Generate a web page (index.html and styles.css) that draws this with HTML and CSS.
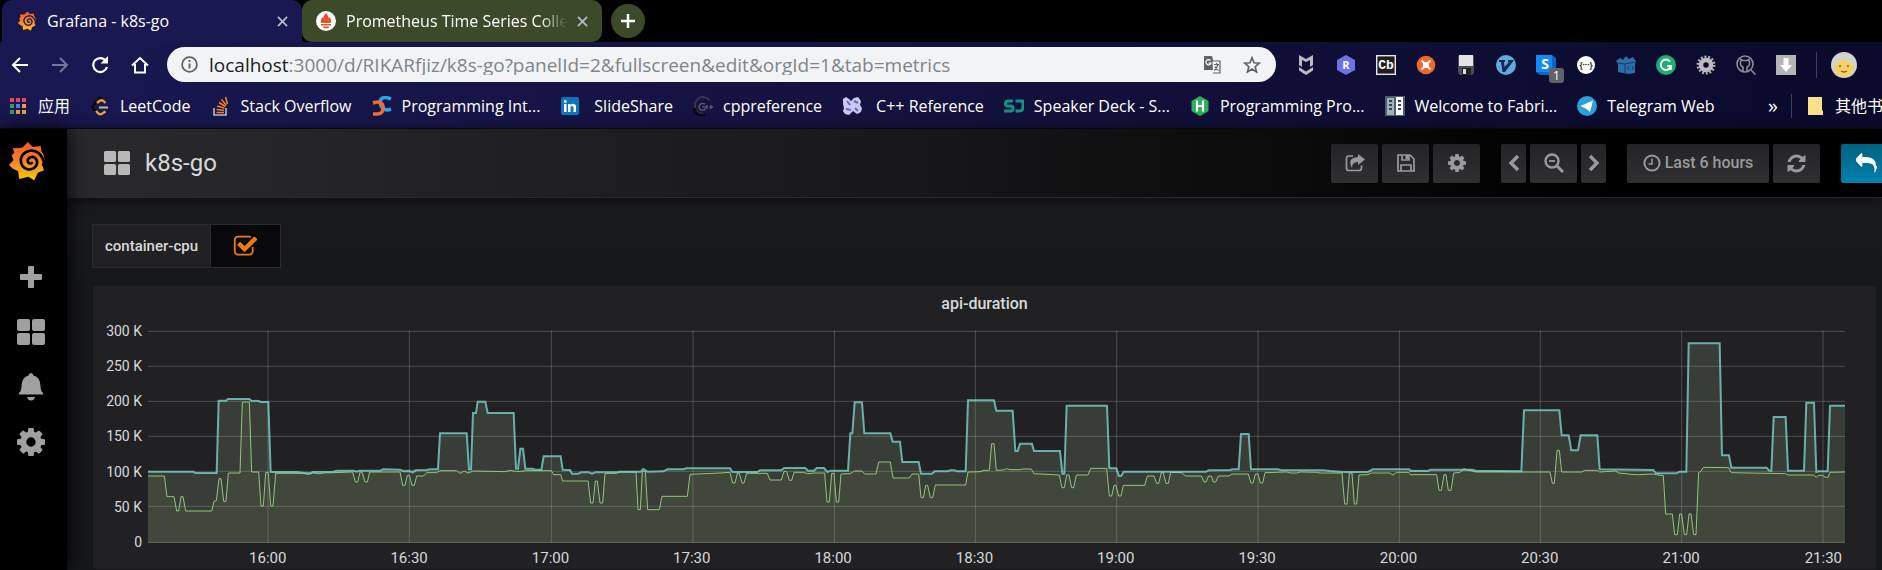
FILE: index.html
```html
<!DOCTYPE html>
<html lang="en">
<head>
<meta charset="utf-8">
<title>Grafana - k8s-go</title>
<link rel="stylesheet" href="styles.css">
</head>
<body>
<svg class="defs" aria-hidden="true">
  <defs>
    <linearGradient id="sun" x1="0" y1="0" x2="0" y2="1"><stop offset="0" stop-color="#f05a28"/><stop offset=".5" stop-color="#f5822a"/><stop offset="1" stop-color="#fbca0a"/></linearGradient>
    <symbol id="grafana" viewBox="25 48 114 122">
      <path fill="url(#sun)" d="M85 51 L99 66 L124 63 L126 80 C133 88 136 98 135 110 L127 119 L134 137 L115 145 L104 168 L86 157 L58 164 L55 140 L38 132 L27 121 L41 106 L35 92 L43 84 L39 70 L60 69 L69 67 Z"/>
      <path fill="none" stroke="currentColor" stroke-width="8" stroke-linecap="round" d="M134 116 C128 86 108 74 90 78 C70 82 60 98 64 114 C68 132 88 140 103 131 C115 123 116 107 106 99 C98 93 85 98 84 108 C84 115 91 119 97 115"/>
    </symbol>
    <symbol id="cog" viewBox="0 -128 1536 1536"><path fill="currentColor" d="M1024 640q0-106-75-181t-181-75-181 75-75 181 75 181 181 75 181-75 75-181zm512-109v222q0 12-8 23t-20 13l-185 28q-19 54-39 91 35 50 107 138 10 12 10 25t-9 23q-27 37-99 108t-94 71q-12 0-26-9l-138-108q-44 23-91 38-16 136-29 186-7 28-36 28h-222q-14 0-24.500-8.500t-11.500-21.500l-28-184q-49-16-90-37l-141 107q-10 9-25 9-14 0-25-11-126-114-165-168-7-10-7-23 0-12 8-23 15-21 51-66.500t54-70.500q-27-50-41-99l-183-27q-13-2-21-12.500t-8-23.500v-222q0-12 8-23t19-13l186-28q14-46 39-92-40-57-107-138-10-12-10-24 0-10 9-23 26-36 98.500-107.500t94.500-71.500q13 0 26 10l138 107q44-23 91-38 16-136 29-186 7-28 36-28h222q14 0 24.500 8.500t11.500 21.500l28 184q49 16 90 37l142-107q9-9 24-9 13 0 25 10 129 119 165 170 7 8 7 22 0 12-8 23-15 21-51 66.500t-54 70.500q26 50 41 98l183 28q13 2 21 12.500t8 23.500z"/></symbol>
    <symbol id="tiles" viewBox="0 0 28 26"><g fill="currentColor"><rect width="13" height="12" rx="2"/><rect x="15" width="13" height="12" rx="2"/><rect y="14" width="13" height="12" rx="2"/><rect x="15" y="14" width="13" height="12" rx="2"/></g></symbol>
    <symbol id="close" viewBox="0 0 12 12"><path d="M1 1 L11 11 M11 1 L1 11" stroke="currentColor" stroke-width="2" fill="none"/></symbol>
  </defs>
</svg>

<header class="browser">
  <div class="tabs">
    <div class="tab tab-active">
      <svg class="fav fav-grafana"><use href="#grafana"/></svg>
      <span class="tab-title">Grafana - k8s-go</span>
      <button class="tab-close" aria-label="Close tab"><svg width="11" height="11"><use href="#close"/></svg></button>
    </div>
    <div class="tab tab-idle">
      <svg class="fav" viewBox="0 0 20 20"><circle cx="10" cy="10" r="10" fill="#fff"/><path fill="#e6522c" d="M10 1.500 C11 4 13 5 12.500 7 L14 6 C14.500 8 15.500 9 15 12 H5 C4.500 9 5.500 8 6 6 L7.500 7 C7 5 9 4 10 1.500Z M5 13h10v1.500H5z M6.500 15.500h7 C12.500 18 7.500 18 6.500 15.500Z"/></svg>
      <span class="tab-title">Prometheus Time Series Collec</span>
      <button class="tab-close" aria-label="Close tab"><svg width="11" height="11"><use href="#close"/></svg></button>
    </div>
    <button class="new-tab" aria-label="New tab"><svg width="16" height="16" viewBox="0 0 16 16"><path d="M8 1v14M1 8h14" stroke="#fff" stroke-width="2.500"/></svg></button>
  </div>

  <div class="toolbar">
    <div class="nav-buttons">
      <button aria-label="Back"><svg width="18" height="18" viewBox="0 0 18 18"><path d="M17 9H2M9 2L2 9l7 7" fill="none" stroke="#fff" stroke-width="2"/></svg></button>
      <button aria-label="Forward"><svg width="18" height="18" viewBox="0 0 18 18"><path d="M1 9h15M9 2l7 7-7 7" fill="none" stroke="#77769a" stroke-width="2"/></svg></button>
      <button aria-label="Reload"><svg width="18" height="18" viewBox="0 0 18 18"><path d="M15 5A7 7 0 1 0 16 11" fill="none" stroke="#fff" stroke-width="2.200"/><path d="M17 0v7.500H9.500z" fill="#fff"/></svg></button>
      <button aria-label="Home"><svg width="18" height="18" viewBox="0 0 18 18"><path d="M1 9.500L9 2l8 7.500M4 8v8.500h10V8" fill="none" stroke="#fff" stroke-width="2"/></svg></button>
    </div>
    <form class="omnibox">
      <svg width="17" height="17" viewBox="0 0 17 17"><circle cx="8.500" cy="8.500" r="7.400" fill="none" stroke="#5f6368" stroke-width="1.800"/><path d="M8.500 7.500v5M8.500 4v2" stroke="#5f6368" stroke-width="1.900"/></svg>
      <label class="host" for="url">localhost</label><input id="url" type="text" value=":3000/d/RIKARfjiz/k8s-go?panelId=2&amp;fullscreen&amp;edit&amp;orgId=1&amp;tab=metrics">
      <button type="button" aria-label="Translate"><svg width="18" height="18" viewBox="0 0 18 18"><path d="M1 0h8l4 14H1z" fill="#5f6368"/><path d="M9.500 5H17v12H10" fill="#f1f3f4" stroke="#5f6368" stroke-width="1.200"/><path d="M7.500 4.500A2.600 2.600 0 1 0 8 7H5.500" fill="none" stroke="#fff" stroke-width="1.200"/><path d="M11 8.500h5M13.500 7v1.500M15 8.500q-1 4-4 6M11.800 10.500q1.500 3 4 4" fill="none" stroke="#5f6368" stroke-width="1.100"/></svg></button>
      <button type="button" aria-label="Bookmark this page"><svg width="18" height="18" viewBox="0 0 18 18"><path d="M9 1.800l2 5 5.200.400-4 3.500 1.300 5.200L9 13l-4.500 2.900 1.300-5.200-4-3.500L7 6.800z" fill="none" stroke="#5f6368" stroke-width="1.700"/></svg></button>
    </form>
    <div class="extensions">
      <button aria-label="Extension: shield"><svg viewBox="0 0 20 20"><path fill="#b9bbc0" d="M3 0l7 4 7-4v10l-3 2V5l-4 2-4-2v7l-3-2z"/><path fill="#b9bbc0" d="M3 12l7 4.500 7-4.500v3.500L10 20l-7-4.500z"/></svg></button>
      <button aria-label="Extension: R"><svg viewBox="0 0 20 20"><path fill="#6f72e6" d="M10 0l9 5v10l-9 5-9-5V5z"/><text x="10" y="14" class="glyph g11">R</text></svg></button>
      <button aria-label="Extension: Cb"><svg viewBox="0 0 20 20"><rect x=".7" y=".7" width="18.600" height="18.600" fill="#1e1e1e" stroke="#e6e6e6" stroke-width="1.400"/><text x="10" y="14" class="glyph mono">Cb</text></svg></button>
      <button aria-label="Extension: lifebuoy"><svg viewBox="0 0 20 20"><circle cx="10" cy="10" r="9.300" fill="#f1662a"/><path d="M5.500 5.500l3 3M14.500 5.500l-3 3M5.500 14.500l3-3M14.500 14.500l-3-3" stroke="#fff" stroke-width="2"/><circle cx="10" cy="10" r="3" fill="#fff"/></svg></button>
      <button aria-label="Extension: save"><svg viewBox="0 0 20 20"><path fill="#4a4d55" d="M2 1h16v17l-2 2H4l-2-2z"/><path fill="#e5e5e8" d="M3 0h14v11H3z"/><path fill="#222" d="M6 13h9v7H6z"/><path fill="#dcdce0" d="M7 14h3v5H7z"/></svg></button>
      <button aria-label="Extension: V"><svg viewBox="0 0 20 20"><circle cx="10" cy="10" r="10" fill="#64a9dc"/><path fill="#0c2b55" d="M3 5h6v2H8l.5 5L13 7h-1V5h6L9 17H6.500L5 7H3z"/></svg></button>
      <button class="with-badge" aria-label="Extension: S, 1"><svg viewBox="0 0 20 20"><path fill="#0e62c9" d="M16 0l4 3v17H4l-4-3z"/><path fill="#1689f5" d="M0 0h16v17H0z"/><text x="9" y="14" class="glyph g14">S</text></svg><span class="badge">1</span></button>
      <button aria-label="Extension: JSON"><svg viewBox="0 0 20 20"><circle cx="10" cy="10" r="9" fill="#fff"/><text x="10" y="13" class="glyph braces">{···}</text></svg></button>
      <button aria-label="Extension: box"><svg viewBox="0 0 20 20"><path fill="#2a6fa8" d="M0 6l4-3 3 2 3-4 3 3 4-2 3 4-1 3v9l-7 1-10-2V9z"/><path d="M1 8l8 1 10-2M9 9v10M13 11l-1.500 2 1.500 2M16 11l1.500 2-1.500 2" stroke="#123b66" fill="none"/></svg></button>
      <button aria-label="Extension: G"><svg viewBox="0 0 20 20"><circle cx="10" cy="10" r="10" fill="#1fae71"/><path d="M14 6.500A5.200 5.200 0 1 0 15 11h-4M15 11l-.3 4" fill="none" stroke="#fff" stroke-width="1.900"/></svg></button>
      <button aria-label="Extension: gear"><svg viewBox="0 0 20 20"><circle cx="10" cy="10" r="8" fill="none" stroke="#a9aab0" stroke-width="3" stroke-dasharray="2 1.590"/><circle cx="10" cy="10" r="5" fill="none" stroke="#bcbcc0" stroke-width="4.500"/></svg></button>
      <button aria-label="Extension: code search"><svg viewBox="0 0 20 20"><circle cx="9" cy="9" r="8" fill="none" stroke="#8b8c98" stroke-width="1.600"/><path d="M15 15l4.500 4.500M7 16v-4Q4 11 4.500 8L5 4.500l2 1h4l2-1L13.500 8Q14 11 11 12v4" fill="none" stroke="#8b8c98" stroke-width="1.600"/></svg></button>
      <button aria-label="Extension: download"><svg viewBox="0 0 20 20"><path fill="#b5b5b8" d="M0 0h20v20H0z"/><path fill="#fff" d="M7.500 3h5v7H16l-6 7-6-7h3.500z"/></svg></button>
    </div>
    <button class="avatar" aria-label="Profile"><svg width="26" height="26" viewBox="0 0 26 26"><circle cx="13" cy="13" r="13" fill="#d2d2d0"/><path fill="#f5d067" d="M3 15q2-5 7-6l4-3q1 4 4 4 4 1 5 5-1 9-10 10Q4 24 3 15z"/><path d="M8 14h2M16 14h2M10 19q3 2 6 0" stroke="#8a5a20" stroke-width="1.500" fill="none"/></svg></button>
  </div>

  <nav class="bookmarks">
    <a href="#"><svg viewBox="0 0 20 20"><path fill="#e5484f" d="M2 2h4v4H2zM8 2h4v4H8zM14 2h4v4h-4z"/><path fill="#3a9c63" d="M2 8h4v4H2z"/><path fill="#4285f4" d="M8 8h4v4H8z"/><path fill="#f0a33c" d="M14 8h4v4h-4zM8 14h4v4H8zM14 14h4v4h-4z"/><path fill="#3a9c63" d="M2 14h4v4H2z"/></svg><span>应用</span></a>
    <a href="#"><svg viewBox="0 0 20 20"><path d="M11 1L3 9.500Q2 11 3 12.500L6 16" fill="none" stroke="#0a0a0a" stroke-width="2.600"/><path d="M7 7l3-2.500q2-1 4 1l1.500 1.500M6 15l3 3q2 1 4-1l2.500-1.500" fill="none" stroke="#f0a030" stroke-width="2.400"/><path d="M9 11.500h9" stroke="#b3b3b3" stroke-width="2.200"/></svg><span>LeetCode</span></a>
    <a href="#"><svg viewBox="0 0 20 20"><path d="M3 12v7h12v-7" fill="none" stroke="#b8bac2" stroke-width="1.600"/><path d="M5.500 16.500h7.500M5.500 13.500l7.500.800M6 10l7.300 2M8 6.500l6.500 4M10.500 3.500l4.700 5.500M14.500 1l2 7" stroke="#f48024" stroke-width="1.600"/></svg><span>Stack Overflow</span></a>
    <a href="#"><svg viewBox="0 0 20 20"><path d="M19 3Q9-1 8 6q1 8 8 8l3-1" fill="none" stroke="#22a7e8" stroke-width="3.600"/><path d="M1 7q8-3 10 3 1 8-6 8H1" fill="none" stroke="#f26b2d" stroke-width="3.600"/></svg><span>Programming Int...</span></a>
    <a href="#" class="wide"><svg viewBox="0 0 20 20"><rect x="1" y="1" width="18" height="18" rx="2" fill="#0e76b8"/><path fill="#fff" d="M4 8h2.500v8H4zM4 4.300h2.500v2.400H4zM8 8h2.400v1q3-2.500 5.600.500V16h-2.500v-5q-1.500-2-3 0v5H8z"/></svg><span>SlideShare</span></a>
    <a href="#"><svg viewBox="0 0 20 20"><path d="M17 4Q8-3 2.500 6 0 16 10 18" fill="none" stroke="#34344f" stroke-width="2"/><path d="M1 12q2 9 11 7" fill="none" stroke="#08081a" stroke-width="3"/><path d="M12 8q-5-2-6 3 1 5 7 2M9 11h5M14 9v4M16 11h4M18 9v4" fill="none" stroke="#55566f" stroke-width="1.500"/></svg><span>cppreference</span></a>
    <a href="#" class="wide"><svg viewBox="0 0 20 20"><path fill="#c9c8f4" d="M1 3l3-2 3 2 2 2 3-3 4-1 3 4-1 4 2 3-1 4-4 2-4-3-4 4-4-1-2-3 1-3-1-4z"/><path d="M5 5l3 4M12 5l4 2M4 13l5 1M13 12l3 3" stroke="#6a68b4" stroke-width="2"/></svg><span>C++ Reference</span></a>
    <a href="#"><svg viewBox="0 0 20 20"><path d="M9 5H3.500q-2 0-2 2.500t2 2.500H7q2 0 2 2.500T7 15H0M11.500 5H19v6q0 4-4 4h-3.500" fill="none" stroke="#149184" stroke-width="3"/></svg><span>Speaker Deck - S...</span></a>
    <a href="#"><svg viewBox="0 0 20 20"><path fill="#2ab05b" d="M10 0l8.500 5v10L10 20l-8.500-5V5z"/><path d="M7 4.500v11M13 4.500v11M7 10h6" stroke="#fff" stroke-width="2.200"/></svg><span>Programming Pro...</span></a>
    <a href="#"><svg viewBox="0 0 20 20"><path fill="#4f606d" d="M0 0h20v20H0z"/><path fill="#9fb1bd" d="M2 2h7v17H2z"/><path fill="#fff" d="M11 1h7v18h-7z"/><path d="M4 5h3M4 9h3M4 13h3M13 5h3M13 9h3M13 13h3" stroke="#34444f" stroke-width="2"/></svg><span>Welcome to Fabri...</span></a>
    <a href="#"><svg viewBox="0 0 20 20"><circle cx="10" cy="10" r="10" fill="#2a9fdc"/><path fill="#fff" d="M3.500 10L16 4.500 13 16l-3.500-3z"/></svg><span>Telegram Web</span></a>
    <button class="overflow" aria-label="More bookmarks">»</button>
    <a href="#" class="other"><svg viewBox="0 0 20 20"><path fill="#fbe08a" d="M3 1h14v13l1 1v4H3z"/></svg><span>其他书签</span></a>
  </nav>
</header>

<div class="app">
  <aside class="sidemenu">
    <a class="logo" href="#" aria-label="Home"><svg width="38" height="40"><use href="#grafana"/></svg></a>
    <a href="#" aria-label="Create"><svg width="22" height="22" viewBox="0 0 22 22"><path fill="currentColor" d="M9 0h4q1 0 1 1v7h7q1 0 1 1v4q0 1-1 1h-7v7q0 1-1 1H9q-1 0-1-1v-7H1q-1 0-1-1V9q0-1 1-1h7V1q0-1 1-1z"/></svg></a>
    <a href="#" aria-label="Dashboards"><svg width="28" height="26"><use href="#tiles"/></svg></a>
    <a href="#" aria-label="Alerting"><svg width="24" height="28" viewBox="0 0 24 28"><path fill="currentColor" d="M12 0q2 0 2.500 2.500Q21 4 21.500 13 21.500 18 24 20v1.500H0V20q2.500-2 2.500-7Q3 4 9.500 2.500 10 0 12 0zM8 24h8q-1 3.500-4 3.500T8 24z"/></svg></a>
    <a href="#" aria-label="Configuration"><svg width="28" height="28"><use href="#cog"/></svg></a>
  </aside>

  <main class="view">
    <div class="navbar">
      <a class="page-title" href="#"><svg width="26" height="26" viewBox="0 0 28 26"><use href="#tiles"/></svg>k8s-go</a>
      <div class="group">
        <button class="btn" aria-label="Share"><svg width="20" height="18" viewBox="0 0 20 18"><path d="M8 2H4Q1.500 2 1.500 4.500V14q0 2.500 2.500 2.500h10q2.500 0 2.500-2.500v-2.500" fill="none" stroke="currentColor" stroke-width="1.700"/><path fill="currentColor" d="M13 0l7 5.500-7 5.500V8q-6-.5-6 6Q1.500 4 13 3z"/></svg></button>
        <button class="btn" aria-label="Save"><svg width="18" height="18" viewBox="0 0 18 18"><path d="M1 1h12l4 4v12H1zM5 1v5h7V1M4 17v-6h10v6" fill="none" stroke="currentColor" stroke-width="1.700"/><path fill="currentColor" d="M8.500 1h2.500v4H8.500z"/></svg></button>
        <button class="btn" aria-label="Settings"><svg width="18" height="18"><use href="#cog"/></svg></button>
      </div>
      <div class="group">
        <button class="btn slim" aria-label="Shift time back"><svg width="12" height="18" viewBox="0 0 12 18"><path d="M10 2L3 9l7 7" fill="none" stroke="currentColor" stroke-width="3.400"/></svg></button>
        <button class="btn" aria-label="Zoom out"><svg width="20" height="20" viewBox="0 0 20 20"><circle cx="8" cy="8" r="6.500" fill="none" stroke="currentColor" stroke-width="2.400"/><path d="M13 13l6 6" stroke="currentColor" stroke-width="3"/><path d="M5 8h6" stroke="currentColor" stroke-width="1.800"/></svg></button>
        <button class="btn slim" aria-label="Shift time forward"><svg width="12" height="18" viewBox="0 0 12 18"><path d="M2 2l7 7-7 7" fill="none" stroke="currentColor" stroke-width="3.400"/></svg></button>
      </div>
      <div class="group">
        <button class="btn range"><svg width="18" height="18" viewBox="0 0 18 18"><circle cx="9" cy="9" r="7.600" fill="none" stroke="currentColor" stroke-width="2"/><path d="M9 4.500V10H5.500" fill="none" stroke="currentColor" stroke-width="1.500"/></svg>Last 6 hours</button>
        <button class="btn" aria-label="Refresh"><svg width="21" height="21" viewBox="0 0 1792 1792"><path fill="currentColor" d="M1639 1056q0 5-1 7-64 268-268 434.500t-478 166.500q-146 0-282.500-55t-243.500-157l-129 129q-19 19-45 19t-45-19-19-45v-448q0-26 19-45t45-19h448q26 0 45 19t19 45-19 45l-137 137q71 66 161 102t187 36q134 0 250-65t186-179q11-17 53-117 8-23 30-23h192q13 0 22.500 9.500t9.500 22.500zm25-800v448q0 26-19 45t-45 19h-448q-26 0-45-19t-19-45 19-45l138-138q-148-137-349-137-134 0-250 65t-186 179q-11 17-53 117-8 23-30 23h-199q-13 0-22.500-9.500t-9.500-22.500v-7q65-268 270-434.500t480-166.500q146 0 284 55.500t245 156.500l130-129q19-19 45-19t45 19 19 45z"/></svg></button>
      </div>
      <button class="btn back" aria-label="Back to dashboard"><svg width="21" height="21" viewBox="0 0 1792 1792"><path fill="currentColor" d="M1792 1120q0 166-127 451-3 7-10.500 24t-13.500 30-13 22q-12 17-28 17-15 0-23.500-10t-8.500-25q0-9 2.500-26.500t2.500-23.500q5-68 5-123 0-112-19.500-200.500t-54-153.500-89-112-117.500-78-151-44.500-177-19.500-206-5h-224v256q0 26-19 45t-45 19-45-19l-512-512q-19-19-19-45t19-45l512-512q19-19 45-19t45 19 19 45v256h224q713 0 875 403 53 134 53 333z"/></svg></button>
    </div>

    <div class="content">
      <label class="submenu">
        <span class="submenu-label">container-cpu</span>
        <span class="submenu-value">
          <input type="checkbox" checked>
          <svg width="25" height="25" viewBox="0 0 1792 1792"><path fill="#eb7b18" d="M1472 930v318q0 119-84.500 203.500t-203.500 84.500h-832q-119 0-203.500-84.500t-84.500-203.500v-832q0-119 84.500-203.500t203.500-84.500h832q63 0 117 25 15 7 18 23 3 17-9 29l-49 49q-10 10-23 10-3 0-9-2-23-6-45-6h-832q-66 0-113 47t-47 113v832q0 66 47 113t113 47h832q66 0 113-47t47-113v-254q0-13 9-22l64-64q10-10 23-10 6 0 12 3 20 8 20 29zm231-489l-814 814q-24 24-57 24t-57-24l-430-430q-24-24-24-57t24-57l110-110q24-24 57-24t57 24l263 263 647-647q24-24 57-24t57 24l110 110q24 24 24 57t-24 57z"/></svg>
        </span>
      </label>

      <section class="panel">
        <h2>api-duration</h2>
        <div class="graph">
          <div class="y-axis"><span>300 K</span><span>250 K</span><span>200 K</span><span>150 K</span><span>100 K</span><span>50 K</span><span>0</span></div>
          <svg class="plot" viewBox="0 61 5091 639" preserveAspectRatio="none" role="img" aria-label="api-duration over the last 6 hours">
            <path class="fill-upper" d="M0 700V486H136L142 490H206L212 273H234L240 268H304L310 273L332 274L338 277H361L368 487H556L566 483H696L706 479H870L876 371H956L963 479H969L975 310H984L989 276H1012L1019 310H1097L1104 477H1110L1117 417H1125L1132 477H1154L1161 480H1180L1187 440H1238L1244 480L1266 481L1272 490H1406L1416 486H1546L1558 477H1746L1753 487H1828L1836 482H1900L1908 475H1972L1980 483H1998L2006 475H2028L2038 485H2100L2107 371H2113L2120 278H2142L2149 371H2227L2234 396H2256L2263 457H2312L2319 492H2352L2360 485H2453L2460 272H2538L2545 303H2594L2602 424H2609L2616 402H2652L2658 424H2736L2743 492H2749L2756 288H2877L2884 476H2905L2913 499H2919L2927 486H3174L3182 482L3254 479H3272L3279 373H3302L3309 479H3390L3586 487H3660L3674 479H3784L3848 480H3972L4120 485L4128 302H4234L4241 377H4262L4270 422H4290L4298 377H4348L4355 479L4516 481L4524 491H4586L4594 486H4615L4622 101H4715L4722 437H4743L4750 474H4856L4864 483H4870L4877 322H4913L4920 483H4968L4975 279H4998L5005 486H5039L5046 288H5091V700Z"/>
            <path class="fill-lower" d="M0 700V499H49L57 561H78L86 604H92L99 561H105L113 604H191L198 575L205 573L213 507H219L227 575H234L241 490H276L283 277H304L311 487H332L339 589H346L353 489H361L368 589H375L383 491L614 487L622 517H629L636 487H642L651 517H658L665 487H756L764 527H771L778 497H784L792 527H799L806 499H826L836 489L876 483H1210L1217 495H1238L1244 514H1320L1328 580H1335L1342 514H1348L1356 580H1364L1371 491L1464 487L1470 600H1477L1483 485H1492L1499 600H1534L1542 560H1618L1626 494L1746 488L1754 520H1761L1768 491H1774L1782 520H1788L1796 491H1858L1866 511H1900L1908 485H1916L1924 512H1931L1938 488L2030 490L2037 577H2044L2051 491H2058L2065 577H2072L2079 493L2106 492L2120 484H2142L2150 493H2184L2192 457H2227L2235 505H2284L2292 493H2312L2319 564H2326L2333 527H2339L2347 564H2354L2362 526H2453L2460 487L2524 482L2531 402H2538L2545 482L2650 478L2658 492L2734 496L2742 534H2749L2756 496H2763L2771 534H2777L2785 496H2820L2828 476H2876L2884 559H2891L2898 527H2904L2912 559H2919L2926 527H2990L2998 499H3018L3026 521H3032L3040 489H3046L3054 521H3061L3068 488L3102 489L3112 499H3242L3252 493H3301L3309 520H3315L3322 493H3330L3337 520H3344L3351 489L3582 490L3590 583H3597L3604 490H3612L3619 583H3626L3633 496L3782 488L3788 495H3866L3873 542H3880L3888 495H3894L3901 542H3909L3917 490L3984 487H4206L4213 521H4219L4227 422H4234L4241 487L4402 484L4462 495L4546 498L4553 613H4573L4580 675H4588L4595 613H4601L4609 675H4616L4623 613H4629L4637 675H4644L4652 488L4666 473L4742 474L4750 489L4922 496H4996L5040 500L5046 488H5091V700Z"/>
            <path class="grid" d="M0 65H5091M0 170H5091M0 275H5091M0 380H5091M0 485H5091M0 590H5091M0 698H5091M360 61V700M784 61V700M1210 61V700M1635 61V700M2059 61V700M2482 61V700M2906 61V700M3330 61V700M3754 61V700M4177 61V700M4601 61V700M5025 61V700"/>
            <path class="line-lower" d="M0 499H49L57 561H78L86 604H92L99 561H105L113 604H191L198 575L205 573L213 507H219L227 575H234L241 490H276L283 277H304L311 487H332L339 589H346L353 489H361L368 589H375L383 491H466L481 494L494 490L514 492L526 490L614 487L622 517H629L636 487H642L651 517H658L665 487H756L764 527H771L778 497H784L792 527H799L806 499H826L836 489H866L876 483H926L934 490H940L948 484L960 490L976 484L1071 486L1088 482L1106 486L1136 483H1210L1217 495H1238L1244 514H1320L1328 580H1335L1342 514H1348L1356 580H1364L1371 491H1406L1416 487H1464L1470 600H1477L1483 485H1492L1499 600H1534L1542 560H1618L1626 494L1716 490L1746 488L1754 520H1761L1768 491H1774L1782 520H1788L1796 491H1858L1866 511H1900L1908 485H1916L1924 512H1931L1938 488H1966L1978 492L2000 490H2030L2037 577H2044L2051 491H2058L2065 577H2072L2079 493L2106 492L2120 484H2142L2150 493H2184L2192 457H2227L2235 505H2284L2292 493H2312L2319 564H2326L2333 527H2339L2347 564H2354L2362 526H2453L2460 487L2496 486L2508 482H2524L2531 402H2538L2545 482L2566 481L2576 477L2586 480H2616L2624 478H2650L2658 492L2734 496L2742 534H2749L2756 496H2763L2771 534H2777L2785 496H2820L2828 476H2876L2884 559H2891L2898 527H2904L2912 559H2919L2926 527H2990L2998 499H3018L3026 521H3032L3040 489H3046L3054 521H3061L3068 488L3102 489L3112 499H3160L3168 517H3174L3182 499H3190L3196 517H3203L3211 499H3242L3252 493H3301L3309 520H3315L3322 493H3330L3337 520H3344L3351 489L3416 487L3426 490H3446L3456 487L3506 488L3516 490H3582L3590 583H3597L3604 490H3612L3619 583H3626L3633 496L3660 495L3670 490H3726L3734 496L3746 488H3782L3788 495H3866L3873 542H3880L3888 495H3894L3901 542H3909L3917 490L3937 488L3947 477L3962 482L3984 487H4206L4213 521H4219L4227 422H4234L4241 487H4302L4310 482H4348L4355 487L4402 484L4412 490L4462 495H4474L4512 493L4546 498L4553 613H4573L4580 675H4588L4595 613H4601L4609 675H4616L4623 613H4629L4637 675H4644L4652 488L4658 486L4666 473L4742 474L4750 489L4912 492L4922 496H4996L5005 503L5012 497H5024L5032 503H5040L5046 488L5091 487"/>
            <path class="line-upper" d="M0 486H136L142 490H206L212 273H234L240 268H304L310 273L332 274L338 277H361L368 487H446L476 491H488L494 487L556 486L566 483H616L626 486L634 483H696L706 479L756 480L766 485L784 484L794 488L804 482L836 481L846 479H870L876 371H956L963 479H969L975 310H984L989 276H1012L1019 310H1097L1104 477H1110L1117 417H1125L1132 477H1154L1161 480H1180L1187 440H1238L1244 480L1266 481L1272 492H1290L1300 488H1322L1332 492L1342 488H1406L1416 486H1478L1486 478L1498 486L1546 485L1558 479H1606L1614 476H1746L1753 487H1828L1836 482H1900L1908 475H1972L1980 483H1998L2006 475H2028L2038 487L2048 483H2100L2107 371H2113L2120 278H2142L2149 371H2227L2234 396H2256L2263 457H2312L2319 492H2352L2360 485H2396L2408 482H2420L2428 485H2453L2460 272H2538L2545 303H2594L2602 424H2609L2616 402H2652L2658 424H2736L2743 492H2749L2756 288H2877L2884 476H2905L2913 499H2919L2927 486H3174L3182 482L3246 481L3254 479H3272L3279 373H3302L3309 479H3390L3400 482H3526L3546 484L3586 487H3660L3674 479H3784L3788 484H3840L3848 480H3972L3984 483L4120 485L4128 302H4234L4241 377H4262L4270 422H4290L4298 377H4348L4355 479L4516 481L4524 491H4586L4594 486H4615L4622 101H4715L4722 437H4743L4750 474H4856L4864 483H4870L4877 322H4913L4920 483H4968L4975 279H4998L5005 487L5012 485H5039L5046 288H5091"/>
          </svg>
          <div class="x-axis"><i></i><span>16:00</span><span>16:30</span><span>17:00</span><span>17:30</span><span>18:00</span><span>18:30</span><span>19:00</span><span>19:30</span><span>20:00</span><span>20:30</span><span>21:00</span><span class="last">21:30</span></div>
        </div>
      </section>
    </div>
  </main>
</div>
</body>
</html>
```
FILE: styles.css
```css
* { box-sizing: border-box; }
html, body { height: 100%; }
body {
  margin: 0;
  display: flex;
  flex-direction: column;
  overflow: hidden;
  background: #161719;
  color: #d8d9da;
  font: 16px/20px Roboto, sans-serif;
}
button { margin: 0; padding: 0; border: 0; background: none; color: inherit; font: inherit; display: flex; align-items: center; justify-content: center; }
a { color: inherit; text-decoration: none; }
svg { display: block; flex: none; }
.defs { position: absolute; width: 0; height: 0; }

/* Browser chrome */
.browser {
  flex: none;
  background: linear-gradient(90deg, #191851, #14123f 45%, #0a0a2c);
  border-bottom: 1px solid #07071c;
  color: #fff;
  font-family: "Open Sans", "Noto Sans CJK SC", sans-serif;
  white-space: nowrap;
}
.tabs { display: flex; align-items: center; height: 42px; padding-left: 2px; background: #000; }
.tab { display: flex; align-items: center; width: 300px; height: 100%; padding: 0 14px 0 15px; gap: 10px; }
.tab-active { background: #191850; border-radius: 10px 10px 0 0; }
.tab-idle { background: #3d4a29; border-radius: 10px; padding-left: 14px; }
.tab-title { flex: 1; overflow: hidden; }
.tab-idle .tab-title { -webkit-mask-image: linear-gradient(90deg, #000 88%, transparent); mask-image: linear-gradient(90deg, #000 88%, transparent); }
.tab-close { color: #b5b6cf; }
.fav { width: 20px; height: 20px; }
.fav-grafana { color: #191850; }
.new-tab { width: 34px; height: 34px; margin-left: 9px; border-radius: 50%; background: #3d4a29; }

.toolbar { display: flex; align-items: center; height: 45px; }
.nav-buttons { display: flex; width: 167px; }
.nav-buttons button { width: 40px; }
.omnibox {
  flex: 1;
  display: flex;
  align-items: center;
  height: 35px;
  margin: 0;
  padding: 0 15px 0 14px;
  border-radius: 18px;
  background: #f1f3f4;
  font-size: 19px;
}
.host { margin-left: 11px; color: #202124; }
.omnibox input { flex: 1; min-width: 0; margin: 0; padding: 0; border: 0; outline: 0; background: none; color: #80858a; font: inherit; }
.omnibox button { margin-left: 22px; }
.extensions { display: flex; padding-left: 10px; }
.extensions button { width: 40px; height: 36px; }
.extensions svg { width: 20px; height: 20px; overflow: visible; }
.glyph { fill: #fff; text-anchor: middle; font-weight: 700; font-family: "Open Sans", sans-serif; }
.g11 { font-size: 11px; }
.g14 { font-size: 14px; }
.mono { font-size: 13px; font-family: "Liberation Mono", monospace; }
.braces { fill: #222; font-size: 8px; }
.with-badge { position: relative; }
.badge { position: absolute; right: 2px; bottom: 0; width: 15px; height: 15px; border-radius: 3px; background: #5f6368; font-size: 12px; line-height: 15px; }
.avatar { width: 66px; height: 26px; margin-left: 10px; padding-right: 12px; border-left: 1px solid #3e3e60; }

.bookmarks { display: flex; align-items: center; height: 41px; padding: 0 0 4px 8px; }
.bookmarks a { display: flex; align-items: center; gap: 10px; margin-right: 20px; }
.bookmarks a svg { width: 20px; height: 20px; }
.bookmarks .wide { gap: 14px; }
.overflow { margin-left: auto; padding-right: 13px; font-size: 20px; }
.bookmarks .other { flex: none; width: 91px; height: 24px; margin: 0; padding-left: 13px; overflow: hidden; border-left: 1px solid #3e3e60; }

/* Application */
.app { flex: 1; display: flex; min-height: 0; }
.sidemenu { width: 67px; flex: none; padding-right: 5px; background: #000; color: #a0a0a0; box-shadow: 0 0 20px #000; z-index: 1; }
.sidemenu a { display: flex; align-items: center; justify-content: center; height: 55px; }
.sidemenu .logo { height: 120px; justify-content: flex-start; align-items: flex-start; padding: 12px 0 0 8px; color: #000; }
.view { flex: 1; min-width: 0; display: flex; flex-direction: column; background: linear-gradient(#1d1e20, #161719 170px); }

.navbar {
  display: flex;
  align-items: center;
  gap: 21px;
  height: 69px;
  flex: none;
  padding-left: 37px;
  background: linear-gradient(90deg, #2a2a2d, #18181a 45%, #000 85%);
  border-bottom: 1px solid #2b2b2d;
  box-shadow: 0 2px 12px #0b0c0e;
}
.page-title { display: flex; align-items: center; gap: 15px; margin-right: auto; color: #d8d9da; font-size: 24px; line-height: 30px; }
.page-title svg { color: #b8b8b8; }
.group { display: flex; gap: 4px; }
.btn { width: 47px; height: 39px; border-radius: 2px; background: linear-gradient(#242427, #303032); color: #9a9a9b; }
.slim { width: 25px; }
.range { width: 142px; gap: 4px; font-weight: 500; }
.back { width: 41px; justify-content: flex-end; padding-right: 5px; border-radius: 2px 0 0 2px; background: linear-gradient(#00627f, #0080b0); color: #fff; }

.content { flex: 1; display: flex; flex-direction: column; align-items: stretch; padding: 26px 6px 1px 25px; }
.submenu { display: flex; align-self: flex-start; height: 44px; margin-bottom: 18px; font-size: 15px; font-weight: 500; }
.submenu-label, .submenu-value { display: flex; align-items: center; justify-content: center; border: 1px solid #2a2b2e; }
.submenu-label { width: 119px; background: #212124; }
.submenu-value { width: 70px; background: #09090b; border-left: 0; }
.submenu-value input { position: absolute; opacity: 0; }
.panel { flex: 1; margin-left: 1px; padding: 8px 31px 0 0; border-radius: 3px; background: #212124; }
.panel h2 { margin: 0 -31px 0 0; font-size: 16px; font-weight: 500; line-height: 20px; text-align: center; }
.graph { display: grid; grid-template-columns: 55px 1fr; margin-top: 16px; font-size: 15px; }
.y-axis { display: flex; flex-direction: column; justify-content: space-between; margin: -9px 0; padding-right: 6px; font-size: 14px; text-align: right; }
.plot { width: 100%; height: 213px; }
.plot path { vector-effect: non-scaling-stroke; }
.fill-upper { fill: rgba(165, 190, 145, .18); }
.fill-lower { fill: rgba(120, 150, 90, .12); }
.grid { fill: none; stroke: rgba(200, 200, 200, .26); stroke-width: 1px; }
.line-lower { fill: none; stroke: #93c47f; stroke-width: 1px; }
.line-upper { fill: none; stroke: #7edbd4; stroke-width: 2px; opacity: .75; }
.x-axis { grid-column: 2; display: grid; grid-template-columns: 49fr repeat(11, 141fr) 93fr; padding-top: 5px; text-align: center; }
.x-axis .last { text-align: right; padding-right: 3px; }
```
